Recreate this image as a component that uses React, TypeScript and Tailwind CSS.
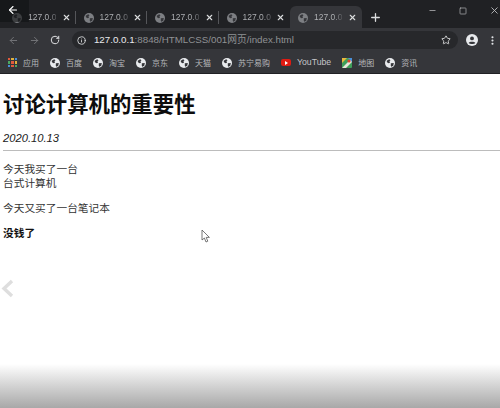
import React from 'react';
import { ArrowLeft, ArrowRight, Info, Minus, MoreVertical, Plus, RotateCw, Square, Star, X } from 'lucide-react';

const FONT = "font-['Noto_Sans_CJK_SC','Liberation_Sans',sans-serif]";

const tabs = [0, 1, 2, 3, 4];
const bookmarks = ['百度', '淘宝', '京东', '天猫', '苏宁易购'];

// chrome's default favicon, filled disc with dark land patches
function Favicon({ size, color, land }: { size: number; color: string; land: string }) {
  return (
    <svg width={size} height={size} viewBox="0 0 12 12" className="shrink-0">
      <circle cx="6" cy="6" r="6" fill={color} />
      <path d="M2 3.2 L5 1.4 L6.6 2.6 L5.4 4 L6 5.6 L4.2 6.2 L2.4 5 Z" fill={land} />
      <path d="M7 6.4 L10.6 6 L10 8.8 L7.8 10.8 L7 8.6 Z" fill={land} />
    </svg>
  );
}

function Tab({ active, last }: { active: boolean; last: boolean }) {
  return (
    <div
      className={`flex items-center h-[22px] w-[71.5px] shrink-0 pt-[1px] pl-[8px] pr-[2px] relative ${
        active ? 'bg-[#35363a] rounded-t-[6px]' : ''
      }`}
    >
      <Favicon size={10} color="#7d7f83" land="#35363a" />
      <span className="ml-[6px] text-[8.5px] font-['Liberation_Sans',sans-serif] whitespace-nowrap text-transparent bg-clip-text bg-gradient-to-r from-[#b4b6b9] from-70% to-[#55565a]">
        127.0.0
      </span>
      <X size={9} className="ml-auto mr-[3px] text-[#dcdddf]" strokeWidth={3} />
      {!active && !last && <div className="absolute right-0 top-[5px] h-[13px] w-px bg-[#55565a]" />}
    </div>
  );
}

function Bookmark({ label }: { label: string }) {
  return (
    <div className="flex items-center h-full shrink-0">
      <Favicon size={10} color="#e8eaed" land="#35363a" />
      <span className="ml-[6px] text-[8px] text-[#b6b8bb]">{label}</span>
    </div>
  );
}

export default function App() {
  return (
    <div className={`${FONT} relative w-[500px] h-[408px] overflow-hidden bg-white`}>
      {/* tab strip */}
      <div className="h-[28px] bg-[#202124] flex items-end pl-[4px] relative">
        {tabs.map((t) => (
          <Tab key={t} active={t === 4} last={t === 3} />
        ))}
        <Plus size={13} className="ml-[7px] mb-[4px] text-[#dcdddf]" strokeWidth={2.4} />
        <div className="ml-auto self-start flex items-center h-[21px] gap-[22px] text-[#b9babc]">
          <Minus size={9} />
          <Square size={8} />
          <X size={11} />
        </div>
      </div>

      {/* address bar */}
      <div className="h-[24px] bg-[#35363a] flex items-center pl-[8px] pr-[2px]">
        <ArrowLeft size={11} className="text-[#77787c]" />
        <ArrowRight size={11} className="ml-[10px] text-[#77787c]" />
        <RotateCw size={10} className="ml-[10px] text-[#dfe0e2]" strokeWidth={2.4} />
        <div className="ml-[12px] w-[387px] h-[18px] rounded-full bg-[#27282b] flex items-center pl-[5px] pr-[7px]">
          <Info size={9} className="text-[#d5d6d8]" strokeWidth={2.4} />
          <span className="ml-[8px] text-[9.75px] text-[#8f9194] font-['Liberation_Sans',sans-serif] whitespace-nowrap">
            <span className="text-[#e8e9eb]">127.0.0.1</span>:8848/HTMLCSS/001
            <span className={FONT}>网页</span>/index.html
          </span>
          <Star size={10} className="ml-auto text-[#d5d6d8]" strokeWidth={2.2} />
        </div>
        <svg width="12" height="12" viewBox="0 0 12 12" className="ml-[8px] shrink-0">
          <circle cx="6" cy="6" r="6" fill="#e8eaed" />
          <circle cx="6" cy="4.4" r="1.9" fill="#35363a" />
          <path d="M2.6 9 C3.4 7.2 8.6 7.2 9.4 9 C8 10.4 4 10.4 2.6 9 Z" fill="#35363a" />
        </svg>
        <MoreVertical size={11} className="ml-[9px] text-[#e8eaed]" strokeWidth={2.6} />
      </div>

      {/* bookmarks */}
      <div className="h-[22px] bg-[#35363a] border-b border-[#202124] flex items-center pl-[8px] gap-[11px]">
        <div className="flex items-center h-full shrink-0">
          <div className="grid grid-cols-3 gap-px w-[9px] h-[9px]">
            <span className="bg-[#e05a3c]" />
            <span className="bg-[#e0b03c]" />
            <span className="bg-[#4a90d9]" />
            <span className="bg-[#4aa860]" />
            <span className="bg-[#e05a3c]" />
            <span className="bg-[#e0b03c]" />
            <span className="bg-[#4a90d9]" />
            <span className="bg-[#e05a3c]" />
            <span className="bg-[#4aa860]" />
          </div>
          <span className="ml-[6px] text-[8px] text-[#b6b8bb]">应用</span>
        </div>
        {bookmarks.map((b) => (
          <Bookmark key={b} label={b} />
        ))}
        <div className="flex items-center h-full shrink-0">
          <div className="w-[10px] h-[7px] rounded-[2px] bg-[#e01b12] flex items-center justify-center">
            <div className="w-0 h-0 border-y-[2px] border-y-transparent border-l-[3px] border-l-white" />
          </div>
          <span className="ml-[6px] text-[8.7px] text-[#c4c5c8] font-['Liberation_Sans',sans-serif]">YouTube</span>
        </div>
        <div className="flex items-center h-full shrink-0">
          <svg width="10" height="10" viewBox="0 0 10 10">
            <rect width="10" height="10" rx="1" fill="#3f9e5a" />
            <path d="M0 10 L10 0 V4 L4 10 Z" fill="#e9e6da" />
            <path d="M6 0 H10 V4 Z" fill="#4a90d9" />
            <path d="M0 0 H5 L0 5 Z" fill="#e8b93c" />
            <circle cx="7" cy="3" r="1.6" fill="#d9442f" />
          </svg>
          <span className="ml-[6px] text-[8px] text-[#b6b8bb]">地图</span>
        </div>
        <Bookmark label="资讯" />
      </div>

      {/* page */}
      <div className="pl-[3px] pt-[14px] bg-white">
        <h1 className="text-[21.4px] leading-[30px] font-bold text-[#0d0d0d]">讨论计算机的重要性</h1>
        <p className="mt-[11px] text-[11.2px] leading-[18px] italic text-[#222] font-['Liberation_Sans',sans-serif]">
          2020.10.13
        </p>
        <hr className="mt-[3px] border-t-[1.5px] border-[#bcbcbc]" />
        <p className="mt-[11px] text-[10.7px] leading-[14px] text-[#333]">
          今天我买了一台
          <br />
          台式计算机
        </p>
        <p className="mt-[11px] text-[10.7px] leading-[14px] text-[#333]">今天又买了一台笔记本</p>
        <p className="mt-[11px] text-[10.7px] leading-[14px] font-bold text-[#111]">没钱了</p>
      </div>

      {/* video overlay bits */}
      <div className="absolute left-0 top-0 w-[29px] h-[22px] bg-[#111214]/60 flex items-center justify-center pb-[2px] pr-[3px]">
        <ArrowLeft size={12} className="text-white" strokeWidth={2.2} />
      </div>
      <svg className="absolute left-[1px] top-[279px]" width="13" height="19" viewBox="0 0 13 19">
        <path d="M11 2 L3 9.5 L11 17" fill="none" stroke="#dedede" strokeWidth="3.4" />
      </svg>
      <svg className="absolute left-[201px] top-[229px]" width="10" height="14" viewBox="0 0 10 14">
        <path d="M1 1 V11 L3.4 9 L5 13 L6.8 12.2 L5.2 8.4 H8.4 Z" fill="#fff" stroke="#555" strokeWidth="0.8" />
      </svg>
      <div className="absolute left-0 right-0 bottom-0 h-[44px] bg-gradient-to-b from-white to-[#a8a8a8]" />
    </div>
  );
}
